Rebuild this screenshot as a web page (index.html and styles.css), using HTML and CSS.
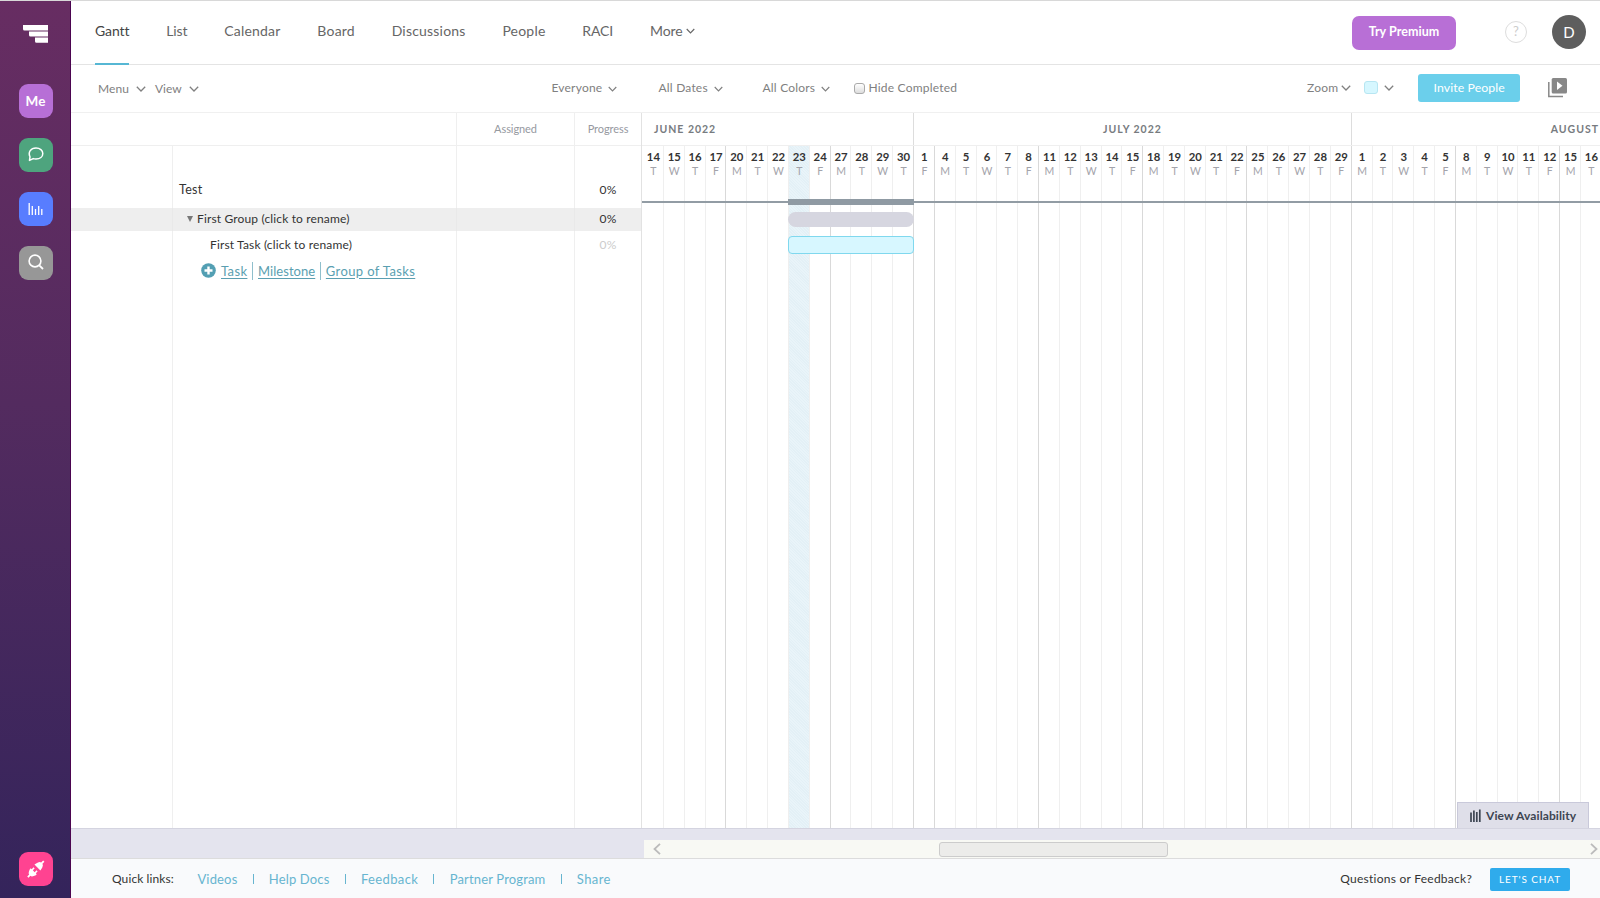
FILE: index.html
```html
<!DOCTYPE html>
<html lang="en">
<head>
<meta charset="utf-8">
<title>Gantt</title>
<link rel="stylesheet" href="styles.css">
</head>
<body>
<svg class="defs" width="0" height="0"><symbol id="chev" viewBox="0 0 10 6"><path d="M.8.8 5 5 9.2.8" fill="none" stroke="currentColor" stroke-width="1.3"/></symbol></svg>
<div class="app">
  <aside class="sidebar">
    <svg class="logo" viewBox="0 0 25 18"><path d="M0 0h25v5.600H1.500Q0 5.600 0 4z M6 6.600h19v5H7.500Q6 11.600 6 10z M12 12.600h13v5.200H13.500Q12 17.800 12 16.300z" fill="#fff"/></svg>
    <div class="tile me"><span>Me</span></div>
    <div class="tile chat"><svg width="16" height="15" viewBox="0 0 16 15"><path d="M2 9.800C-.2 5.200 2.800 1 8 1c4 0 6.800 2.300 6.800 5.500S12 12 8 12c-1 0-2-.1-2.800-.4L1.500 13.400z" fill="none" stroke="#fff" stroke-width="1.500" stroke-linejoin="round"/></svg></div>
    <div class="tile load"><svg width="15" height="14" viewBox="0 0 15 14"><path d="M1.200 1v12M4.300 4v9M7.500 7v6M10.700 4v9M13.800 7v6" stroke="#fff" stroke-width="1.300"/></svg></div>
    <div class="tile find"><svg width="16" height="16" viewBox="0 0 16 16"><circle cx="7" cy="7" r="5.900" fill="none" stroke="#fff" stroke-width="1.600"/><path d="m11.300 11.300 3.700 3.700" stroke="#fff" stroke-width="1.800"/></svg></div>
    <div class="tile plug"><svg width="20" height="20" viewBox="-10 -10 20 20"><g transform="rotate(45)" fill="#fff"><path d="M-4.200-2H4.200L3.400-5.500Q2.500-8 .9-8.200V-11H-.9V-8.200Q-2.500-8-3.400-5.500z"/><path d="M-4.200 3.200h1.300V.6h1.600v2.600h2.600V.6h1.600v2.600h1.300v1.300L3.400 6.500Q2.500 8.600.9 8.800V11.500H-.9V8.800Q-2.500 8.600-3.400 6.500L-4.200 4.500z"/></g></svg></div>
  </aside>
  <main class="main">
    <header class="header">
      <nav class="nav">
        <a class="active">Gantt</a><a>List</a><a class="wide">Calendar</a><a class="wide">Board</a><a class="wide">Discussions</a><a class="wide">People</a><a>RACI</a><a>More<svg class="chev"><use href="#chev"/></svg></a>
      </nav>
      <div class="account">
        <button class="premium">Try Premium</button>
        <span class="help">?</span>
        <span class="avatar">D</span>
      </div>
    </header>
    <div class="toolbar">
      <div class="group menus">
        <span>Menu</span><svg class="chev"><use href="#chev"/></svg>
        <span>View</span><svg class="chev"><use href="#chev"/></svg>
      </div>
      <div class="group filters">
        <div class="pick"><span>Everyone</span><svg class="chev"><use href="#chev"/></svg></div>
        <div class="pick"><span>All Dates</span><svg class="chev"><use href="#chev"/></svg></div>
        <div class="pick"><span>All Colors</span><svg class="chev"><use href="#chev"/></svg></div>
        <div class="hide"><i class="check"></i><span>Hide Completed</span></div>
      </div>
      <div class="group tools">
        <span>Zoom</span><svg class="chev"><use href="#chev"/></svg>
        <i class="swatch"></i><svg class="chev"><use href="#chev"/></svg>
        <button class="invite">Invite People</button>
        <svg class="slides" width="19" height="20" viewBox="0 0 19 20"><rect x="3.700" y="0" width="15.300" height="15.500" rx="1.500" fill="#888"/><path d="M9 3.500v8.500l5.500-4.200z" fill="#fff"/><path d="M.8 4v14.500H15" fill="none" stroke="#888" stroke-width="1.500"/></svg>
      </div>
    </div>
    <div class="workspace">
      <section class="table">
        <div class="row head"><div></div><div></div><div>Assigned</div><div>Progress</div></div>
        <div class="row project"><div></div><div class="name">Test</div><div></div><div>0%</div></div>
        <div class="row grp"><div></div><div class="name"><i class="tri"></i><span>First Group (click to rename)</span></div><div></div><div>0%</div></div>
        <div class="row task"><div></div><div class="name"><span>First Task (click to rename)</span></div><div></div><div class="faint">0%</div></div>
        <div class="row add"><div></div><div class="name"><svg width="15" height="15" viewBox="0 0 15 15"><circle cx="7.500" cy="7.500" r="7.300" fill="#539fb3"/><path d="M7.500 3.500v8M3.500 7.500h8" stroke="#fff" stroke-width="2.400"/></svg><a class="loose">Task</a><i></i><a>Milestone</a><i></i><a class="loose">Group of Tasks</a></div><div></div><div></div></div>
        <div class="row fill"><div></div><div></div><div></div><div></div></div>
      </section>
      <section class="chart">
        <div class="months"><div class="june">JUNE 2022</div><div class="july">JULY 2022</div><div class="august">AUGUST</div></div>
        <div class="days" id="days"></div>
        <div class="baseline"></div>
        <div class="bar summary"></div>
        <div class="bar phase"></div>
        <div class="bar item"></div>
        <div class="avail"><svg width="11" height="13" viewBox="0 0 11 13"><path d="M1 3.500V13M3.900 1.500V13M6.800 3V13M9.800.5V13" stroke="#3d4552" stroke-width="1.700"/></svg><span>View Availability</span></div>
      </section>
    </div>
    <div class="scroller"><div class="track"><svg viewBox="0 0 8 12"><path d="M7 .8 1.500 6 7 11.200"/></svg><div class="thumb"></div><svg viewBox="0 0 8 12"><path d="M1 .8 6.500 6 1 11.200"/></svg></div></div>
    <footer class="footer">
      <span class="quick">Quick links:</span>
      <a>Videos</a><i></i><a>Help Docs</a><i></i><a class="loose">Feedback</a><i></i><a>Partner Program</a><i></i><a class="loose">Share</a>
      <span class="ask">Questions or Feedback?</span>
      <button class="lets">LET'S CHAT</button>
    </footer>
  </main>
</div>
<script src="script.js"></script>
</body>
</html>
```
FILE: styles.css
```css
*{box-sizing:border-box}
body{margin:0;font-family:Lato,"Liberation Sans",sans-serif;font-size:13px;color:#333;background:#fff;overflow:hidden}
button{border:0;font:inherit;color:#fff;padding:0;display:flex;align-items:center;justify-content:center}
span,a{white-space:nowrap}
.defs{display:block}
.app{display:flex;width:1600px;height:898px;border-top:1px solid #d8d8d8}
.sidebar{width:71px;background:linear-gradient(#672d62,#532b5f 45%,#34245b);border-right:1px solid #4b0550;display:flex;flex-direction:column;align-items:center;padding:24px 0 0 1px}
.logo{width:25px;height:18px;margin-bottom:41px}
.tile{width:34px;height:34px;border-radius:9px;display:flex;align-items:center;justify-content:center;margin-bottom:20px;flex:none}
.me{background:#b76fd6;color:#fff;font-weight:700;font-size:13.500px;padding-bottom:1px}
.chat{background:#4ea47e;padding-bottom:2px}
.load{background:#587dff}
.find{background:#979797;padding-bottom:2px}
.plug{background:#ff4391;margin-top:auto;margin-bottom:12px}
.main{flex:1;min-width:0;display:flex;flex-direction:column}
.chev{width:10px;height:6px;flex:none}
.header{height:64px;border-bottom:1px solid #e4e4e4;display:flex;justify-content:space-between;padding:0 14px 0 24px}
.nav{display:flex;gap:36.800px;font-size:14px;color:#666}
.nav a{display:flex;align-items:center;padding-bottom:3px;height:64px;border-bottom:2px solid transparent;letter-spacing:-.1px}
.nav .wide{letter-spacing:.2px}
.nav .active{color:#444;border-color:#56b7d4}
.nav .chev{margin-left:4px;width:9px}
.account{display:flex;align-items:center;padding-bottom:1px}
.premium{width:104px;height:34px;border-radius:7px;background:#b86fd6;font-weight:700;font-size:12.500px;letter-spacing:.05px;padding-bottom:3px;margin-top:1px}
.help{width:22px;height:22px;border:1.500px solid #ddd;border-radius:50%;color:#ccc;text-align:center;line-height:18px;margin-left:49px}
.avatar{width:34px;height:34px;border-radius:50%;background:#5e5e5e;color:#fff;font-size:15px;display:flex;align-items:center;justify-content:center;margin-left:25px}
.toolbar{height:48px;border-bottom:1px solid #f0f0f0;display:flex;align-items:center;color:#808080;font-size:12px;letter-spacing:.2px;padding-bottom:2px}
.group,.pick,.hide{display:flex;align-items:center}
.menus{margin-left:27px;width:453.500px;padding-top:2px}
.menus span{letter-spacing:.05px}
.menus .chev{margin:1px 9px 0 7px}
.filters{width:755.500px}
.pick{width:107px}
.pick:nth-child(2){width:104px}
.pick:nth-child(3){width:91px}
.pick .chev{margin:2px 0 0 6px;width:9px}
.check{width:11px;height:11px;border:1px solid #aaa;border-radius:3px;background:linear-gradient(#fff,#ddd);margin:1px 4px 0 0}
.tools .chev{margin-left:3px}
.swatch{width:14px;height:13px;border:1px solid #b7e6f2;border-radius:3px;background:#d6f7ff;margin:0 3px 0 13px}
.invite{width:102px;height:28px;border-radius:3px;background:#6bcfeb;margin:1px 28px 0 24px;font-size:12.300px;letter-spacing:.1px;padding-bottom:1px}
.workspace{height:715px;display:flex}
.table{width:571px;display:flex;flex-direction:column;border-right:1px solid #e2e2e2;font-size:12px;letter-spacing:.15px}
.row{display:grid;grid-template-columns:102px 284px 118px 66px;flex:none}
.row>div{border-right:1px solid #efefef;display:flex;align-items:center;justify-content:center;min-width:0}
.row>div:last-child{border-right:0}
.row .name{justify-content:flex-start}
.head{height:33px;border-bottom:1px solid #efefef;color:#96999f;font-size:11px;letter-spacing:-.08px}
.head>div{padding-bottom:1px}
.head>div:first-child{border-color:transparent}
.project{height:62px}
.project>div{padding-top:25px}
.project .name{padding-left:6px;font-size:12.500px;letter-spacing:.3px;padding-top:24px}
.grp{height:23px;background:#eee}
.grp>div{border-color:#e9e9e9;padding-bottom:2px}
.tri{border:3.500px solid transparent;border-top:6px solid #777;border-bottom:0;margin:0 4px 0 14px}
.task{height:27px}
.task>div{padding-bottom:1px}
.task .name{padding-left:37px}
.row .faint{color:#ccc}
.add{height:27px;font-size:13px}
.add>div{padding-bottom:2px}
.add .name{padding-left:28px;color:#5b9fb1;letter-spacing:.05px}
.add svg{margin-right:5px}
.add a{text-decoration:underline;text-underline-offset:2px}
.add .loose,.footer .loose{letter-spacing:.38px}
.add i{width:1px;height:18px;background:#8fbfcc;margin:0 4.800px}
.fill{flex:1}
.chart{flex:1;min-width:0;position:relative;overflow:hidden;display:flex;flex-direction:column}
.months{height:33px;flex:none;display:flex;border-bottom:1px solid #efefef;font-size:10.500px;font-weight:700;letter-spacing:.98px;color:#777b80}
.months>div{flex:none;display:flex;align-items:center;justify-content:center;border-right:1px solid #ddd}
.months .june{width:272px;justify-content:flex-start;padding-left:12px}
.july{width:437.750px}
.months .august{flex:1;justify-content:flex-end;border-right:0;padding-right:1px}
.days{flex:1;display:flex;padding-left:1px}
.day{width:20.845px;flex:none;border-right:1px solid #efefef;text-align:center;font-size:10.500px;color:#a3a3aa;line-height:15px;padding:3px 0 0 1px}
.day b{display:block;color:#333;font-size:11.300px}
.day.week{border-right-color:#d9d9d9}
.day.now{background:repeating-linear-gradient(45deg,#e3f0f6 0 1px,#e9f4f9 1px 2px)}
.baseline{position:absolute;left:0;right:0;top:88px;height:2px;background:#929ca4}
.bar{position:absolute;left:146px;width:126px}
.summary{top:86px;height:6px;background:#8f9aa3}
.phase{top:99px;height:15px;border-radius:8px;background:#d6d6e0}
.item{top:123px;height:18px;border:1px solid #80d8ee;border-radius:4px;background:#d7f7ff}
.avail{position:absolute;left:815px;bottom:0;width:132px;height:26px;background:#dfdfe9;border:1px solid #c9c9da;border-bottom:0;display:flex;align-items:center;padding-left:12px;gap:5px;font-weight:700;font-size:12px;letter-spacing:.1px;color:#3d4552}
.scroller{height:31px;background:#e4e4ee;border-top:1px solid #d4d4e0;border-bottom:1px solid #dcdcdc;padding:11px 0 0 573px}
.track{height:18px;background:#f8f9f4;display:flex;align-items:center;padding:0 2px 0 9px}
.track svg{width:8px;height:12px;fill:none;stroke:#bbb;stroke-width:1.800}
.thumb{width:229px;height:15px;border:1px solid #ccc;border-radius:3px;background:#ececea;margin:1px auto 0 278px}
.footer{flex:1;background:#f9fafc;display:flex;align-items:center;padding:0 30px 0 41px}
.footer a{color:#67b5d0;letter-spacing:.16px}
.footer a,.footer span,.footer i{flex:none}
.footer span{font-size:12px;letter-spacing:.25px}
.footer .quick{margin-right:23.500px;letter-spacing:.1px}
.footer i{width:1px;height:10px;background:#67b5d0;margin:0 15.200px}
.footer .ask{margin-left:auto;margin-right:18px}
.lets{width:80px;height:23px;background:#2fabec;border-radius:2px;font-size:10px;letter-spacing:.9px;margin-top:1px}
```
FILE: script.js
```js
// Working days shown on the timeline, starting Tuesday 14 June 2022.
const months = [
  [14,15,16,17,20,21,22,23,24,27,28,29,30],
  [1,4,5,6,7,8,11,12,13,14,15,18,19,20,21,22,25,26,27,28,29],
  [1,2,3,4,5,8,9,10,11,12,15,16]
];
const days = document.getElementById('days');
months.flat().forEach((n, i) => {
  const d = document.createElement('div');
  const weekday = (i + 1) % 5;
  d.className = 'day' + (weekday === 4 || i === 12 ? ' week' : '') + (i === 7 ? ' now' : '');
  d.innerHTML = '<b>' + n + '</b>' + 'MTWTF'[weekday];
  days.append(d);
});
```
